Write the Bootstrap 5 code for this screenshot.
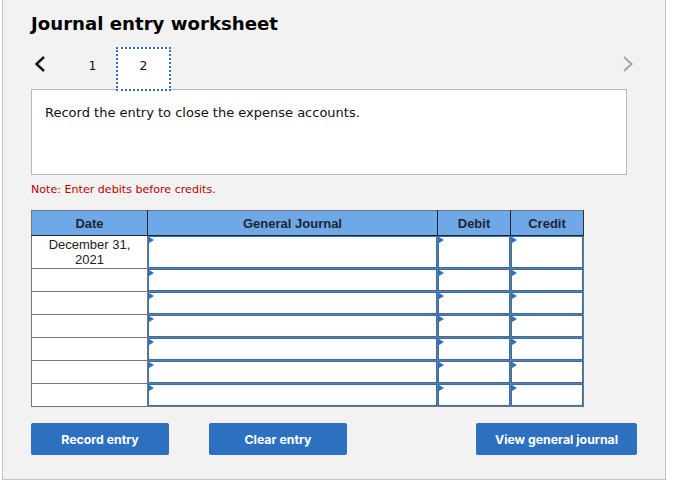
<!DOCTYPE html>
<html lang="en">
<head>
<meta charset="utf-8">
<title>Journal entry worksheet</title>
<link rel="stylesheet" href="https://cdn.jsdelivr.net/npm/bootstrap@5.3.0/dist/css/bootstrap.min.css">
<style>
html,body{background:#fff;margin:0;}
.sheet{width:664px;height:480px;margin-left:2px;background:#f2f2f2;border:1px solid #c2c2c2;border-top:0;padding:12px 28px 0 28px;font-family:"DejaVu Sans",sans-serif;color:#000;}
.sheet-title{font-family:"DejaVu Sans",sans-serif;font-weight:700;font-size:18.15px;line-height:24px;margin:0 0 11px 0;color:#000;}
.tabs-row{height:43px;margin-bottom:-1px;}
.arrow-btn{width:18px;height:18px;}
.tab-num{width:51px;height:38px;font-size:12.4px;display:flex;align-items:center;justify-content:center;color:#111;}
.tab-first{margin-left:18px;}
.tab-on{background:#fff;border:2px dotted #2e70c0;position:relative;z-index:1;height:44px;width:55px;margin-left:-2px;padding-bottom:6px;}
.prompt-box{background:#fff;border:1px solid #b8b8b8;height:86px;width:596px;padding:14px 13px;font-size:13px;line-height:18px;color:#111;}
.note-line{color:#c00000;font-size:11.1px;line-height:14px;margin:8px 0 13px 0;}
.jt{table-layout:fixed;width:553px;border-collapse:collapse;font-family:"Liberation Sans",sans-serif;font-size:13px;}
.jt th{background:#6fa8e8;height:25px;padding:2px 0 0;text-align:center;font-weight:700;color:#1c2530;border:1px solid #777;border-left:1px solid #222;border-right:1px solid #222;border-bottom:1px solid #222;line-height:14px;}
.jt th:first-child{border-left:1px solid #777;}
.jt th:last-child{border-right:1px solid #333;}
.jt td{background:#fff;border:1px solid #777;height:23px;padding:0;text-align:center;line-height:15px;color:#222;}
.jt tr.tall td{height:33px;}
.jt td.entry{position:relative;border:1px solid #777;padding:0;}
.entry-box{position:absolute;inset:0;border:1px solid #2e70c0;background:#fff;}
.entry-box::before{content:"";position:absolute;left:0;top:0;border-left:5px solid #2e70c0;border-top:3.5px solid transparent;border-bottom:3.5px solid transparent;}
.actions{width:606px;margin-top:16px;}
.act{background:#2e70c0;border:0;border-radius:2px;color:#fff;font-family:Inter,sans-serif;font-weight:700;font-size:12.3px;height:32px;padding:2px 0 0;}
.act-a{width:138px;}
.act-b{width:138px;margin-left:40px;}
.act-c{width:161px;margin-left:auto;}
</style>
</head>
<body>
<div class="sheet">
  <h1 class="sheet-title">Journal entry worksheet</h1>
  <div class="tabs-row d-flex align-items-start">
    <svg class="arrow-btn mt-2" viewBox="0 0 18 18"><path d="M13 2 L5.5 9 L13 16" fill="none" stroke="#111" stroke-width="2.4"/></svg>
    <div class="tab-num tab-first">1</div>
    <div class="tab-num tab-on">2</div>
    <svg class="arrow-btn mt-2 ms-auto" viewBox="0 0 18 18"><path d="M5 2 L12.5 9 L5 16" fill="none" stroke="#a8a8a8" stroke-width="2.2"/></svg>
  </div>
  <div class="prompt-box">Record the entry to close the expense accounts.</div>
  <p class="note-line">Note: Enter debits before credits.</p>
  <table class="jt">
    <colgroup><col style="width:116px"><col style="width:290px"><col style="width:73px"><col style="width:73px"></colgroup>
    <thead><tr><th>Date</th><th>General Journal</th><th>Debit</th><th>Credit</th></tr></thead>
    <tbody>
      <tr class="tall"><td>December 31,<br>2021</td><td class="entry"><div class="entry-box"></div></td><td class="entry"><div class="entry-box"></div></td><td class="entry"><div class="entry-box"></div></td></tr>
      <tr><td></td><td class="entry"><div class="entry-box"></div></td><td class="entry"><div class="entry-box"></div></td><td class="entry"><div class="entry-box"></div></td></tr>
      <tr><td></td><td class="entry"><div class="entry-box"></div></td><td class="entry"><div class="entry-box"></div></td><td class="entry"><div class="entry-box"></div></td></tr>
      <tr><td></td><td class="entry"><div class="entry-box"></div></td><td class="entry"><div class="entry-box"></div></td><td class="entry"><div class="entry-box"></div></td></tr>
      <tr><td></td><td class="entry"><div class="entry-box"></div></td><td class="entry"><div class="entry-box"></div></td><td class="entry"><div class="entry-box"></div></td></tr>
      <tr><td></td><td class="entry"><div class="entry-box"></div></td><td class="entry"><div class="entry-box"></div></td><td class="entry"><div class="entry-box"></div></td></tr>
      <tr><td></td><td class="entry"><div class="entry-box"></div></td><td class="entry"><div class="entry-box"></div></td><td class="entry"><div class="entry-box"></div></td></tr>
    </tbody>
  </table>
  <div class="actions d-flex">
    <button type="button" class="btn act act-a">Record entry</button>
    <button type="button" class="btn act act-b">Clear entry</button>
    <button type="button" class="btn act act-c">View general journal</button>
  </div>
</div>
<script src="https://cdn.jsdelivr.net/npm/bootstrap@5.3.0/dist/js/bootstrap.bundle.min.js"></script>
</body>
</html>
